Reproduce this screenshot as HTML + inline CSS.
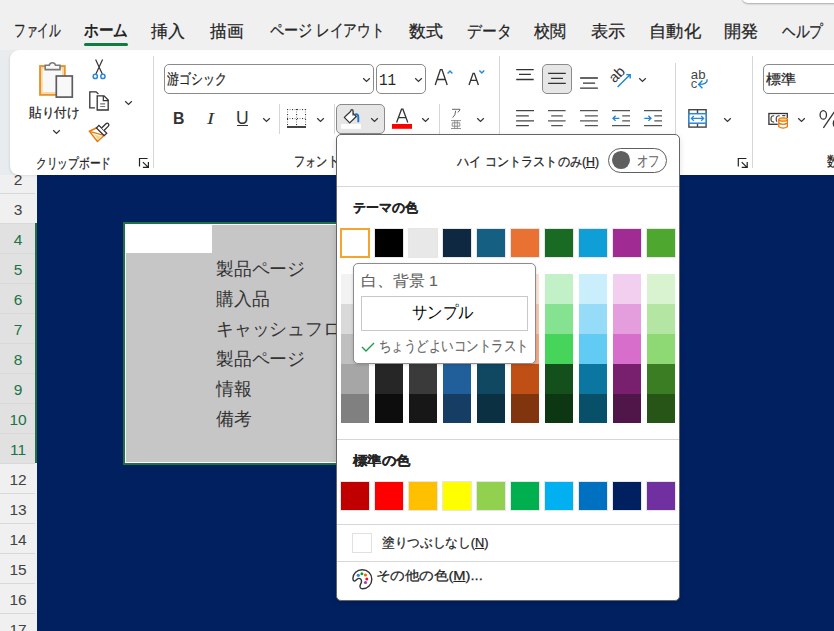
<!DOCTYPE html>
<html><head><meta charset="utf-8">
<style>
*{box-sizing:border-box;margin:0;padding:0}
html,body{width:834px;height:631px;overflow:hidden;background:#f0f0f0;font-family:"Liberation Sans",sans-serif;color:#242424}
.a{position:absolute}
.t{position:absolute;white-space:nowrap;line-height:1;-webkit-text-stroke:0.25px currentColor}
.tab{font-size:16px;top:23px;color:#242424}
.sep{position:absolute;width:1px;background:#d6d6d6}
.rh{position:absolute;left:0;width:35px;height:30px;border-bottom:1px solid #d9d9d9;font-size:15.5px;text-align:center;line-height:30px;color:#424242}
.sw{position:absolute;width:28px;height:28px;box-shadow:0 0 0 1px #e6e6e6}
.ct{position:absolute;left:217px;font-size:17px;line-height:1;color:#333;white-space:nowrap}
</style></head><body>

<div class="a" style="left:0;top:0;width:834px;height:50px;background:#f0f0f0"></div>
<div class="t" style="left:14.3px;top:23.3px;font-size:16.80px;transform:scaleX(0.6888);transform-origin:0 0;">ファイル</div>
<div class="t" style="left:84.0px;top:23.3px;font-size:16.80px;transform:scaleX(0.8606);transform-origin:0 0;font-weight:bold;-webkit-text-stroke:0">ホーム</div>
<div class="t" style="left:151.0px;top:24.2px;font-size:16.80px;transform:scaleX(0.9946);transform-origin:0 0;">挿入</div>
<div class="t" style="left:209.8px;top:24.2px;font-size:16.80px;transform:scaleX(0.9768);transform-origin:0 0;">描画</div>
<div class="t" style="left:269.7px;top:23.0px;font-size:16.80px;transform:scaleX(0.8310);transform-origin:0 0;">ページ</div>
<div class="t" style="left:315.9px;top:23.2px;font-size:16.80px;transform:scaleX(0.8038);transform-origin:0 0;">レイアウト</div>
<div class="t" style="left:408.5px;top:24.2px;font-size:16.80px;transform:scaleX(0.9950);transform-origin:0 0;">数式</div>
<div class="t" style="left:466.5px;top:23.8px;font-size:16.80px;transform:scaleX(0.8716);transform-origin:0 0;">データ</div>
<div class="t" style="left:533.8px;top:24.2px;font-size:16.80px;transform:scaleX(0.9406);transform-origin:0 0;">校閲</div>
<div class="t" style="left:591.0px;top:24.2px;font-size:16.80px;transform:scaleX(1.0078);transform-origin:0 0;">表示</div>
<div class="t" style="left:648.7px;top:24.2px;font-size:16.80px;transform:scaleX(1.0188);transform-origin:0 0;">自動化</div>
<div class="t" style="left:723.7px;top:24.2px;font-size:16.80px;transform:scaleX(1.0098);transform-origin:0 0;">開発</div>
<div class="t" style="left:781.6px;top:24.2px;font-size:16.80px;transform:scaleX(0.8056);transform-origin:0 0;">ヘルプ</div>
<div class="a" style="left:84px;top:43px;width:44px;height:3px;border-radius:2px;background:#107c41"></div>
<div class="a" style="left:742px;top:-10px;width:120px;height:13px;background:#fff;border-radius:6px;box-shadow:0 1px 2px rgba(0,0,0,.3)"></div>
<div class="a" style="left:0;top:50px;width:20px;height:125px;background:#e8ecef"></div>
<div class="a" style="left:0;top:175px;width:37px;height:456px;background:#f0f0f0"></div>
<div class="a" style="left:37px;top:175px;width:797px;height:456px;background:#002060"></div>
<div class="rh" style="top:164px;height:30px;background:#f0f0f0;color:#424242"><span style="position:relative;top:0.5px;left:0.5px">2</span></div>
<div class="rh" style="top:194px;height:30px;background:#f0f0f0;color:#424242"><span style="position:relative;top:0.5px;left:0.5px">3</span></div>
<div class="rh" style="top:224px;height:30px;background:#e1e1e1;color:#1a7444"><span style="position:relative;top:0.5px;left:0.5px">4</span></div>
<div class="rh" style="top:254px;height:30px;background:#e1e1e1;color:#1a7444"><span style="position:relative;top:0.5px;left:0.5px">5</span></div>
<div class="rh" style="top:284px;height:30px;background:#e1e1e1;color:#1a7444"><span style="position:relative;top:0.5px;left:0.5px">6</span></div>
<div class="rh" style="top:314px;height:30px;background:#e1e1e1;color:#1a7444"><span style="position:relative;top:0.5px;left:0.5px">7</span></div>
<div class="rh" style="top:344px;height:30px;background:#e1e1e1;color:#1a7444"><span style="position:relative;top:0.5px;left:0.5px">8</span></div>
<div class="rh" style="top:374px;height:30px;background:#e1e1e1;color:#1a7444"><span style="position:relative;top:0.5px;left:0.5px">9</span></div>
<div class="rh" style="top:404px;height:30px;background:#e1e1e1;color:#1a7444"><span style="position:relative;top:0.5px;left:0.5px">10</span></div>
<div class="rh" style="top:434px;height:30px;background:#e1e1e1;color:#1a7444"><span style="position:relative;top:0.5px;left:0.5px">11</span></div>
<div class="rh" style="top:464px;height:30px;background:#f0f0f0;color:#424242"><span style="position:relative;top:0.5px;left:0.5px">12</span></div>
<div class="rh" style="top:494px;height:30px;background:#f0f0f0;color:#424242"><span style="position:relative;top:0.5px;left:0.5px">13</span></div>
<div class="rh" style="top:524px;height:30px;background:#f0f0f0;color:#424242"><span style="position:relative;top:0.5px;left:0.5px">14</span></div>
<div class="rh" style="top:554px;height:30px;background:#f0f0f0;color:#424242"><span style="position:relative;top:0.5px;left:0.5px">15</span></div>
<div class="rh" style="top:584px;height:30px;background:#f0f0f0;color:#424242"><span style="position:relative;top:0.5px;left:0.5px">16</span></div>
<div class="rh" style="top:614px;height:30px;background:#f0f0f0;color:#424242"><span style="position:relative;top:0.5px;left:0.5px">17</span></div>
<div class="a" style="left:35px;top:223px;width:2px;height:240px;background:#1f7044"></div>
<div class="a" style="left:0;top:50px;width:20px;height:125px;background:#e8ecef"></div>
<div class="a" style="left:10px;top:50px;width:840px;height:125px;background:#fff;border-radius:9px;box-shadow:-1px 1px 2px rgba(0,0,0,.08)"></div>
<div class="a" style="left:123px;top:222px;width:230px;height:243px;border:2px solid #1f7044;background:#c6c6c6;box-shadow:inset 0 0 0 1px #fff"></div>
<div class="a" style="left:125px;top:224px;width:87px;height:29px;background:#fff"></div>
<div class="t" style="left:216px;top:260.8px;font-size:17.5px;transform:scaleX(0.989);transform-origin:0 0;color:#333;-webkit-text-stroke:0">製品ページ</div>
<div class="t" style="left:216px;top:290.8px;font-size:17.5px;transform:scaleX(0.989);transform-origin:0 0;color:#333;-webkit-text-stroke:0">購入品</div>
<div class="t" style="left:216px;top:320.8px;font-size:17.5px;transform:scaleX(0.989);transform-origin:0 0;color:#333;-webkit-text-stroke:0">キャッシュフロー</div>
<div class="t" style="left:216px;top:350.8px;font-size:17.5px;transform:scaleX(0.989);transform-origin:0 0;color:#333;-webkit-text-stroke:0">製品ページ</div>
<div class="t" style="left:216px;top:380.8px;font-size:17.5px;transform:scaleX(0.989);transform-origin:0 0;color:#333;-webkit-text-stroke:0">情報</div>
<div class="t" style="left:216px;top:410.8px;font-size:17.5px;transform:scaleX(0.989);transform-origin:0 0;color:#333;-webkit-text-stroke:0">備考</div>
<div class="t" style="left:28.8px;top:105.5px;font-size:13.30px;transform:scaleX(0.9658);transform-origin:0 0;">貼り付け</div>
<svg class="a" style="left:51.5px;top:129.0px" width="9" height="6" viewBox="0 0 9 6"><path d="M1.2 1.2 L4.5 4.4 L7.8 1.2" fill="none" stroke="#333" stroke-width="1.2"/></svg>
<div class="t" style="left:35.6px;top:155.6px;font-size:14.30px;transform:scaleX(0.7676);transform-origin:0 0;">クリップボード</div>
<svg class="a" style="left:124.0px;top:99.5px" width="9" height="6" viewBox="0 0 9 6"><path d="M1.2 1.2 L4.5 4.4 L7.8 1.2" fill="none" stroke="#333" stroke-width="1.2"/></svg>
<div class="sep" style="left:153px;top:56px;height:112px"></div>
<div class="a" style="left:164px;top:64px;width:210px;height:30px;border:1px solid #8a8a8a;border-radius:5px"></div>
<div class="t" style="left:166.8px;top:72.3px;font-size:14.60px;transform:scaleX(0.7956);transform-origin:0 0;">游ゴシック</div>
<svg class="a" style="left:362.0px;top:77.0px" width="9" height="6" viewBox="0 0 9 6"><path d="M1.2 1.2 L4.5 4.4 L7.8 1.2" fill="none" stroke="#333" stroke-width="1.2"/></svg>
<div class="a" style="left:376px;top:64px;width:50px;height:30px;border:1px solid #8a8a8a;border-radius:5px"></div>
<div class="t" style="left:379.4px;top:72.9px;font-size:16.00px;transform:scaleX(0.8907);transform-origin:0 0;font-family:'Liberation Mono';-webkit-text-stroke:0">11</div>
<svg class="a" style="left:414.0px;top:77.0px" width="9" height="6" viewBox="0 0 9 6"><path d="M1.2 1.2 L4.5 4.4 L7.8 1.2" fill="none" stroke="#333" stroke-width="1.2"/></svg>
<div class="t" style="left:173.3px;top:109.9px;font-size:16.03px;transform:scaleX(0.9877);transform-origin:0 0;font-weight:bold;color:#333;-webkit-text-stroke:0">B</div>
<div class="t" style="left:207.0px;top:109.5px;font-size:17.16px;transform:scaleX(1.2293);transform-origin:0 0;font-family:'Liberation Serif';font-style:italic;color:#333;-webkit-text-stroke:0">I</div>
<div class="t" style="left:236.0px;top:110.3px;font-size:17.96px;transform:scaleX(0.9768);transform-origin:0 0;color:#333;-webkit-text-stroke:0">U</div>
<div class="a" style="left:237px;top:125px;width:11px;height:1.4px;background:#333"></div>
<svg class="a" style="left:261.5px;top:116.5px" width="9" height="6" viewBox="0 0 9 6"><path d="M1.2 1.2 L4.5 4.4 L7.8 1.2" fill="none" stroke="#333" stroke-width="1.2"/></svg>
<div class="sep" style="left:279px;top:104px;height:30px"></div>
<svg class="a" style="left:316.0px;top:116.5px" width="9" height="6" viewBox="0 0 9 6"><path d="M1.2 1.2 L4.5 4.4 L7.8 1.2" fill="none" stroke="#333" stroke-width="1.2"/></svg>
<div class="sep" style="left:334px;top:104px;height:30px"></div>
<div class="a" style="left:336px;top:104px;width:49px;height:30px;border:1px solid #8a8a8a;border-radius:5px;background:#e6e6e6"></div>
<svg class="a" style="left:370.0px;top:116.5px" width="9" height="6" viewBox="0 0 9 6"><path d="M1.2 1.2 L4.5 4.4 L7.8 1.2" fill="none" stroke="#333" stroke-width="1.2"/></svg>
<svg class="a" style="left:421.0px;top:116.5px" width="9" height="6" viewBox="0 0 9 6"><path d="M1.2 1.2 L4.5 4.4 L7.8 1.2" fill="none" stroke="#333" stroke-width="1.2"/></svg>
<div class="sep" style="left:439px;top:104px;height:30px"></div>
<svg class="a" style="left:475.5px;top:116.5px" width="9" height="6" viewBox="0 0 9 6"><path d="M1.2 1.2 L4.5 4.4 L7.8 1.2" fill="none" stroke="#333" stroke-width="1.2"/></svg>
<div class="t" style="left:294.3px;top:154.4px;font-size:14.30px;transform:scaleX(0.7987);transform-origin:0 0;">フォント</div>
<div class="sep" style="left:499px;top:56px;height:112px"></div>
<div class="a" style="left:542px;top:64px;width:30px;height:30px;border:1px solid #8a8a8a;border-radius:5px;background:#e6e6e6"></div>
<svg class="a" style="left:638.0px;top:77.0px" width="9" height="6" viewBox="0 0 9 6"><path d="M1.2 1.2 L4.5 4.4 L7.8 1.2" fill="none" stroke="#333" stroke-width="1.2"/></svg>
<svg class="a" style="left:723.0px;top:117.0px" width="9" height="6" viewBox="0 0 9 6"><path d="M1.2 1.2 L4.5 4.4 L7.8 1.2" fill="none" stroke="#333" stroke-width="1.2"/></svg>
<div class="sep" style="left:675px;top:63px;height:105px"></div>
<div class="sep" style="left:752px;top:56px;height:112px"></div>
<div class="a" style="left:763px;top:64px;width:100px;height:30px;border:1px solid #8a8a8a;border-radius:5px"></div>
<div class="t" style="left:766.0px;top:72.0px;font-size:14.00px;transform:scaleX(1.0710);transform-origin:0 0;">標準</div>
<svg class="a" style="left:797.0px;top:117.0px" width="9" height="6" viewBox="0 0 9 6"><path d="M1.2 1.2 L4.5 4.4 L7.8 1.2" fill="none" stroke="#333" stroke-width="1.2"/></svg>
<svg class="a" style="left:810px;top:100px" width="30" height="32" viewBox="810 100 30 32"><g fill="none" stroke="#333" stroke-width="1.3"><ellipse cx="823.3" cy="114.9" rx="3.2" ry="4.3"/><path d="M823.4 127.8 L835.5 110.2"/><ellipse cx="836.5" cy="123.4" rx="3.2" ry="4.3"/></g></svg>
<div class="t" style="left:827px;top:154.4px;font-size:14.3px;transform:scaleX(0.85);transform-origin:0 0">数</div>
<svg class="a" style="left:0;top:0" width="834" height="180" viewBox="0 0 834 180">
<g fill="none" stroke-linecap="butt">
<!-- paste -->
<rect x="40.1" y="66.1" width="24.6" height="28.7" fill="#f8f8f8" stroke="#E8912D" stroke-width="2"/>
<rect x="41.9" y="67.9" width="21" height="25" fill="none" stroke="#F9D48B" stroke-width="1.4"/>
<path d="M45.2 65.3 H49.2 A3.3 3.3 0 0 1 55.6 65.3 H60 V69.6 H45.2 Z" fill="#f8f8f8" stroke="#7a7a7a" stroke-width="1.6"/>
<rect x="56.3" y="76" width="16" height="21.1" fill="#f8f8f8" stroke="#5c5c5c" stroke-width="1.7"/>
<!-- scissors -->
<path d="M95.6 59.5 L102.3 74 M102.6 59.5 L95.9 74" stroke="#333" stroke-width="1.2"/>
<circle cx="95.3" cy="76.4" r="2.1" stroke="#2b88d8" stroke-width="1.5" fill="#fff"/>
<circle cx="102.9" cy="76.4" r="2.1" stroke="#2b88d8" stroke-width="1.5" fill="#fff"/>
<!-- copy -->
<path d="M94.9 107.8 H89.8 V91.8 H96.1 L98.4 94" stroke="#333" stroke-width="1.3" fill="#fff"/>
<path d="M97.2 95.9 H104 L108.2 100.1 V110 H97.2 Z" stroke="#333" stroke-width="1.3" fill="#fff"/>
<path d="M103.3 95.9 V100.6 H108.2" stroke="#333" stroke-width="1.2"/>
<path d="M100.2 103.9 H105.2 M100.2 106.5 H105.2" stroke="#777" stroke-width="1.1"/>
<!-- brush -->
<g transform="translate(101.5 130.6) rotate(45)">
<path d="M-5.4 1.4 Q-6.5 5 -8.3 9 L4.8 10.5 L5.2 1.4 Z" fill="#fff" stroke="#E8780E" stroke-width="1.5" stroke-linejoin="round"/>
<path d="M-2.5 7.6 L4.6 4.3 L4.4 9.6 Z" fill="#F9D48B"/>
<path d="M-7.3 8.6 L5 1.6" stroke="#E8780E" stroke-width="1.3"/>
<rect x="-5.5" y="-1.9" width="11" height="3.6" fill="#fff" stroke="#333" stroke-width="1.3"/>
<path d="M-1.7 -1.9 V-8 A1.7 1.7 0 0 1 1.7 -8 V-1.9" fill="#fff" stroke="#333" stroke-width="1.3"/>
</g>
<!-- launchers -->
<path d="M139.5 166.6 V158.5 H147.6 M142.9 162.1 L148 167.2 M142.9 167.3 H148.4 V162.1" stroke="#222" stroke-width="1.2"/>
<path d="M738.3 166.6 V158.5 H746.4 M741.7 162.1 L746.8 167.2 M741.7 167.3 H747.2 V162.1" stroke="#222" stroke-width="1.2"/>
<!-- grow/shrink A -->
<path d="M435.2 85 L440.4 69.6 H442 L447.2 85 M437.3 79.5 H445.1" stroke="#333" stroke-width="1.35"/>
<path d="M447.6 73.5 L450 71 L452.4 73.5" stroke="#2b88d8" stroke-width="1.5"/>
<path d="M469 85 L473.1 73.4 H474.3 L478.4 85 M470.6 80.4 H476.8" stroke="#333" stroke-width="1.35"/>
<path d="M479.4 70.5 L481.8 73 L484.2 70.5" stroke="#2b88d8" stroke-width="1.5"/>
<!-- borders -->
<rect x="287" y="109" width="1.1" height="1.1" fill="#3a3a3a" stroke="none"/>
<rect x="287" y="111.5" width="1.1" height="1.1" fill="#999" stroke="none"/>
<rect x="287" y="114" width="1.1" height="1.1" fill="#3a3a3a" stroke="none"/>
<rect x="287" y="116.5" width="1.1" height="1.1" fill="#999" stroke="none"/>
<rect x="287" y="118" width="1.1" height="1.1" fill="#3a3a3a" stroke="none"/>
<rect x="287" y="119" width="1.1" height="1.1" fill="#3a3a3a" stroke="none"/>
<rect x="287" y="121.5" width="1.1" height="1.1" fill="#999" stroke="none"/>
<rect x="287" y="124" width="1.1" height="1.1" fill="#3a3a3a" stroke="none"/>
<rect x="289.5" y="109" width="1.1" height="1.1" fill="#999" stroke="none"/>
<rect x="289.5" y="118" width="1.1" height="1.1" fill="#999" stroke="none"/>
<rect x="292" y="109" width="1.1" height="1.1" fill="#3a3a3a" stroke="none"/>
<rect x="292" y="118" width="1.1" height="1.1" fill="#3a3a3a" stroke="none"/>
<rect x="294.5" y="109" width="1.1" height="1.1" fill="#999" stroke="none"/>
<rect x="294.5" y="118" width="1.1" height="1.1" fill="#999" stroke="none"/>
<rect x="296" y="109" width="1.1" height="1.1" fill="#3a3a3a" stroke="none"/>
<rect x="296" y="111.5" width="1.1" height="1.1" fill="#999" stroke="none"/>
<rect x="296" y="114" width="1.1" height="1.1" fill="#3a3a3a" stroke="none"/>
<rect x="296" y="116.5" width="1.1" height="1.1" fill="#999" stroke="none"/>
<rect x="296" y="119" width="1.1" height="1.1" fill="#3a3a3a" stroke="none"/>
<rect x="296" y="121.5" width="1.1" height="1.1" fill="#999" stroke="none"/>
<rect x="296" y="124" width="1.1" height="1.1" fill="#3a3a3a" stroke="none"/>
<rect x="297" y="109" width="1.1" height="1.1" fill="#3a3a3a" stroke="none"/>
<rect x="297" y="118" width="1.1" height="1.1" fill="#3a3a3a" stroke="none"/>
<rect x="299.5" y="109" width="1.1" height="1.1" fill="#999" stroke="none"/>
<rect x="299.5" y="118" width="1.1" height="1.1" fill="#999" stroke="none"/>
<rect x="302" y="109" width="1.1" height="1.1" fill="#3a3a3a" stroke="none"/>
<rect x="302" y="118" width="1.1" height="1.1" fill="#3a3a3a" stroke="none"/>
<rect x="304.5" y="109" width="1.1" height="1.1" fill="#999" stroke="none"/>
<rect x="304.5" y="118" width="1.1" height="1.1" fill="#999" stroke="none"/>
<rect x="305" y="109" width="1.1" height="1.1" fill="#3a3a3a" stroke="none"/>
<rect x="305" y="111.5" width="1.1" height="1.1" fill="#999" stroke="none"/>
<rect x="305" y="114" width="1.1" height="1.1" fill="#3a3a3a" stroke="none"/>
<rect x="305" y="116.5" width="1.1" height="1.1" fill="#999" stroke="none"/>
<rect x="305" y="119" width="1.1" height="1.1" fill="#3a3a3a" stroke="none"/>
<rect x="305" y="121.5" width="1.1" height="1.1" fill="#999" stroke="none"/>
<rect x="305" y="124" width="1.1" height="1.1" fill="#3a3a3a" stroke="none"/>
<rect x="287" y="126" width="19" height="2" fill="#444" stroke="none"/>
<!-- bucket -->
<path d="M350.8 111.2 L344.3 117.4 L349.7 122.9 L356.3 116.5 L353.2 113.4" stroke="#333" stroke-width="1.3" fill="#fff" stroke-linejoin="round"/>
<path d="M353.1 115.6 V111.2 Q353.1 109.6 351.9 109.6 Q350.8 109.6 350.7 111.3" stroke="#333" stroke-width="1.3"/>
<path d="M355.4 114.3 Q358.3 113.6 358.3 117.2 V121.4" stroke="#1a73c8" stroke-width="1.9" stroke-linecap="round"/>
<rect x="341.1" y="124" width="20" height="4.8" fill="#fff"/>
<!-- font color A -->
<path d="M396.6 122.4 L401.5 109.2 H402.9 L407.8 122.4 M398.5 117.6 H405.9" stroke="#333" stroke-width="1.3"/>
<rect x="392" y="124" width="20" height="4.8" fill="#ff0000"/>
<!-- phonetic -->
<path d="M452 109.3 H460 Q459.5 111.5 457.6 112.3 M455.6 110.8 Q455.6 115.5 452.6 117.6" stroke="#555" stroke-width="0.9"/>
<path d="M451 120.6 H461 M451 128.5 H461 M454.7 120.6 V128.5 M457.3 120.6 V128.5 M452.2 122.8 V126.2 H459.8 V122.8 Z" stroke="#777" stroke-width="0.8"/>
<!-- align top/mid/bottom -->
<path d="M516.2 69.6 H533.7 M519 74.4 H530.9 M516.2 79.5 H533.7" stroke="#333" stroke-width="1.3"/>
<path d="M548.1 73.3 H565.8 M551.1 78.3 H563 M548.1 83.3 H565.8" stroke="#333" stroke-width="1.3"/>
<path d="M580.1 78 H597.9 M583 83.1 H595.1 M580.1 88.2 H597.9" stroke="#333" stroke-width="1.3"/>
<!-- orientation -->
<text x="0" y="0" font-family="Liberation Sans" font-size="14.5" fill="#333" transform="translate(614.5 83.6) rotate(-45)">ab</text>
<path d="M617.6 87 L630.2 74.6 M626.3 74.6 H630.2 V78.6" stroke="#1a86d9" stroke-width="1.4"/>
<!-- row2 align -->
<path d="M516.1 110.7 H534 M516.1 115.9 H528.8 M516.1 120.9 H534 M516.1 125.7 H528.8" stroke="#444" stroke-width="1.3"/>
<path d="M548 110.7 H565.6 M551.2 115.9 H562.8 M548 120.9 H565.6 M551.2 125.7 H562.8" stroke="#555" stroke-width="1.3"/>
<path d="M580 110.7 H597.9 M584.8 115.9 H597.9 M580 120.9 H597.9 M584.8 125.7 H597.9" stroke="#555" stroke-width="1.3"/>
<path d="M612 110.7 H630 M622.2 115.9 H630 M622.2 120.9 H630 M612 125.7 H630" stroke="#555" stroke-width="1.3"/>
<path d="M613 118.3 H619.4 M615.6 115.7 L613 118.3 L615.6 120.9" stroke="#1a86d9" stroke-width="1.3"/>
<path d="M644 110.7 H662 M654.3 115.9 H662 M654.3 120.9 H662 M644 125.7 H662" stroke="#555" stroke-width="1.3"/>
<path d="M644.3 118.3 H651 M648.4 115.7 L651 118.3 L648.4 120.9" stroke="#1a86d9" stroke-width="1.3"/>
<!-- wrap -->
<text x="690.8" y="78.5" font-family="Liberation Sans" font-size="13.2" fill="#444">ab</text>
<text x="690.8" y="88" font-family="Liberation Sans" font-size="13.2" fill="#555">c</text>
<path d="M707.2 79.2 Q707.6 84.4 699 84.4 M702.4 80.6 L698.6 84.4 L702.4 88.2" stroke="#1a86d9" stroke-width="1.4"/>
<!-- merge -->
<rect x="688.9" y="109.7" width="17.2" height="17.4" stroke="#444" stroke-width="1.4"/>
<path d="M697.5 109.7 V113.5 M697.5 123.3 V127" stroke="#444" stroke-width="1.4"/>
<rect x="688.9" y="113.7" width="17.2" height="9.5" fill="#fff" stroke="#2b88d8" stroke-width="1.5"/>
<path d="M691.5 118.4 H703.5 M693.8 116 L691.4 118.4 L693.8 120.8 M701.2 116 L703.6 118.4 L701.2 120.8" stroke="#2b88d8" stroke-width="1.3"/>
<!-- accounting -->
<rect x="768.9" y="113.5" width="18.4" height="10.8" stroke="#333" stroke-width="1.3"/>
<path d="M774.2 115.8 Q771 115.3 771 118.9 Q771 122.4 774.2 122 M779.6 115.8 Q776.2 115.3 776.2 118.9 Q776.2 121.2 777.2 121.8 M782.3 115.6 H785.3" stroke="#444" stroke-width="1.2"/>
<rect x="777.8" y="117.5" width="11" height="11.5" rx="3" fill="#fff" stroke="none"/>
<ellipse cx="783.1" cy="119.5" rx="4.3" ry="1.7" fill="#F9D48B" stroke="#E8780E" stroke-width="1.3"/>
<path d="M778.8 119.5 V126.8 Q783.1 129.5 787.4 126.8 V119.5 M778.8 123.1 Q783.1 125.6 787.4 123.1" stroke="#E8780E" stroke-width="1.3" fill="none"/>
</g>
</svg>
<div class="a" style="left:336px;top:134px;width:344px;height:467px;background:#fff;border:1px solid #666;border-radius:5px;box-shadow:0 2px 6px rgba(0,0,0,.12)"></div>
<div class="t" style="left:456.9px;top:155.4px;font-size:13.20px;transform:scaleX(0.9343);transform-origin:0 0;">ハイ コントラストのみ(<u>H</u>)</div>
<div class="a" style="left:608px;top:148px;width:59px;height:25px;border:1px solid #5f5f5f;border-radius:13px"></div>
<div class="a" style="left:612px;top:151.2px;width:17.8px;height:17.8px;border-radius:50%;background:#5f5f5f"></div>
<div class="t" style="left:637.4px;top:153.2px;font-size:15.00px;transform:scaleX(0.7649);transform-origin:0 0;color:#5f5f5f;-webkit-text-stroke:0.1px currentColor">オフ</div>
<div class="a" style="left:337px;top:186px;width:342px;height:1px;background:#d6d6d6"></div>
<div class="t" style="left:353.2px;top:200.6px;font-size:13.00px;transform:scaleX(0.9951);transform-origin:0 0;font-weight:bold;-webkit-text-stroke:0.2px currentColor">テーマの色</div>
<div class="sw" style="left:341px;top:229px;background:#FFFFFF"></div>
<div class="a" style="left:341px;top:274px;width:28px;height:30px;background:#F2F2F2"></div>
<div class="a" style="left:341px;top:304px;width:28px;height:30px;background:#D9D9D9"></div>
<div class="a" style="left:341px;top:334px;width:28px;height:30px;background:#BFBFBF"></div>
<div class="a" style="left:341px;top:364px;width:28px;height:30px;background:#A6A6A6"></div>
<div class="a" style="left:341px;top:394px;width:28px;height:29px;background:#808080"></div>
<div class="sw" style="left:375px;top:229px;background:#000000"></div>
<div class="a" style="left:375px;top:274px;width:28px;height:30px;background:#808080"></div>
<div class="a" style="left:375px;top:304px;width:28px;height:30px;background:#595959"></div>
<div class="a" style="left:375px;top:334px;width:28px;height:30px;background:#404040"></div>
<div class="a" style="left:375px;top:364px;width:28px;height:30px;background:#262626"></div>
<div class="a" style="left:375px;top:394px;width:28px;height:29px;background:#0D0D0D"></div>
<div class="sw" style="left:409px;top:229px;background:#E8E8E8"></div>
<div class="a" style="left:409px;top:274px;width:28px;height:30px;background:#D1D1D1"></div>
<div class="a" style="left:409px;top:304px;width:28px;height:30px;background:#AEAEAE"></div>
<div class="a" style="left:409px;top:334px;width:28px;height:30px;background:#747474"></div>
<div class="a" style="left:409px;top:364px;width:28px;height:30px;background:#3A3A3A"></div>
<div class="a" style="left:409px;top:394px;width:28px;height:29px;background:#171717"></div>
<div class="sw" style="left:443px;top:229px;background:#0E2841"></div>
<div class="a" style="left:443px;top:274px;width:28px;height:30px;background:#DCEAF7"></div>
<div class="a" style="left:443px;top:304px;width:28px;height:30px;background:#A6CAEC"></div>
<div class="a" style="left:443px;top:334px;width:28px;height:30px;background:#4E95D9"></div>
<div class="a" style="left:443px;top:364px;width:28px;height:30px;background:#215F9A"></div>
<div class="a" style="left:443px;top:394px;width:28px;height:29px;background:#163E64"></div>
<div class="sw" style="left:477px;top:229px;background:#156082"></div>
<div class="a" style="left:477px;top:274px;width:28px;height:30px;background:#C1E5F5"></div>
<div class="a" style="left:477px;top:304px;width:28px;height:30px;background:#83CBEB"></div>
<div class="a" style="left:477px;top:334px;width:28px;height:30px;background:#46B1E1"></div>
<div class="a" style="left:477px;top:364px;width:28px;height:30px;background:#104862"></div>
<div class="a" style="left:477px;top:394px;width:28px;height:29px;background:#0B3041"></div>
<div class="sw" style="left:511px;top:229px;background:#E97132"></div>
<div class="a" style="left:511px;top:274px;width:28px;height:30px;background:#FBE3D6"></div>
<div class="a" style="left:511px;top:304px;width:28px;height:30px;background:#F6C6AD"></div>
<div class="a" style="left:511px;top:334px;width:28px;height:30px;background:#F2AA84"></div>
<div class="a" style="left:511px;top:364px;width:28px;height:30px;background:#C04F15"></div>
<div class="a" style="left:511px;top:394px;width:28px;height:29px;background:#80350E"></div>
<div class="sw" style="left:545px;top:229px;background:#196B24"></div>
<div class="a" style="left:545px;top:274px;width:28px;height:30px;background:#C2F1C8"></div>
<div class="a" style="left:545px;top:304px;width:28px;height:30px;background:#84E291"></div>
<div class="a" style="left:545px;top:334px;width:28px;height:30px;background:#47D45A"></div>
<div class="a" style="left:545px;top:364px;width:28px;height:30px;background:#13501B"></div>
<div class="a" style="left:545px;top:394px;width:28px;height:29px;background:#0D3612"></div>
<div class="sw" style="left:579px;top:229px;background:#0F9ED5"></div>
<div class="a" style="left:579px;top:274px;width:28px;height:30px;background:#CAEEFB"></div>
<div class="a" style="left:579px;top:304px;width:28px;height:30px;background:#96DCF8"></div>
<div class="a" style="left:579px;top:334px;width:28px;height:30px;background:#61CBF4"></div>
<div class="a" style="left:579px;top:364px;width:28px;height:30px;background:#0B76A0"></div>
<div class="a" style="left:579px;top:394px;width:28px;height:29px;background:#084F6A"></div>
<div class="sw" style="left:613px;top:229px;background:#A02B93"></div>
<div class="a" style="left:613px;top:274px;width:28px;height:30px;background:#F2CFEE"></div>
<div class="a" style="left:613px;top:304px;width:28px;height:30px;background:#E59EDD"></div>
<div class="a" style="left:613px;top:334px;width:28px;height:30px;background:#D86ECC"></div>
<div class="a" style="left:613px;top:364px;width:28px;height:30px;background:#78206E"></div>
<div class="a" style="left:613px;top:394px;width:28px;height:29px;background:#501649"></div>
<div class="sw" style="left:647px;top:229px;background:#4EA72E"></div>
<div class="a" style="left:647px;top:274px;width:28px;height:30px;background:#D9F2D0"></div>
<div class="a" style="left:647px;top:304px;width:28px;height:30px;background:#B4E5A2"></div>
<div class="a" style="left:647px;top:334px;width:28px;height:30px;background:#8ED973"></div>
<div class="a" style="left:647px;top:364px;width:28px;height:30px;background:#3B7D23"></div>
<div class="a" style="left:647px;top:394px;width:28px;height:29px;background:#275417"></div>
<div class="a" style="left:340px;top:228px;width:30px;height:30px;border:2px solid #f7a32f;background:#fff"></div>
<div class="a" style="left:337px;top:439px;width:342px;height:1px;background:#d6d6d6"></div>
<div class="t" style="left:353.2px;top:453.9px;font-size:13.00px;transform:scaleX(1.1016);transform-origin:0 0;font-weight:bold;-webkit-text-stroke:0.2px currentColor">標準の色</div>
<div class="sw" style="left:341px;top:482px;background:#C00000"></div>
<div class="sw" style="left:375px;top:482px;background:#FF0000"></div>
<div class="sw" style="left:409px;top:482px;background:#FFC000"></div>
<div class="sw" style="left:443px;top:482px;background:#FFFF00"></div>
<div class="sw" style="left:477px;top:482px;background:#92D050"></div>
<div class="sw" style="left:511px;top:482px;background:#00B050"></div>
<div class="sw" style="left:545px;top:482px;background:#00B0F0"></div>
<div class="sw" style="left:579px;top:482px;background:#0070C0"></div>
<div class="sw" style="left:613px;top:482px;background:#002060"></div>
<div class="sw" style="left:647px;top:482px;background:#7030A0"></div>
<div class="a" style="left:337px;top:524px;width:342px;height:1px;background:#d6d6d6"></div>
<div class="a" style="left:352px;top:533px;width:20px;height:20px;border:1px solid #e0e0e0"></div>
<div class="t" style="left:381.5px;top:536.3px;font-size:13.20px;transform:scaleX(0.9749);transform-origin:0 0;">塗りつぶしなし(<u>N</u>)</div>
<div class="a" style="left:337px;top:561px;width:342px;height:1px;background:#d6d6d6"></div>
<div class="t" style="left:376.2px;top:568.6px;font-size:13.20px;transform:scaleX(1.1143);transform-origin:0 0;">その他の色(<u>M</u>)...</div>
<svg class="a" style="left:352px;top:569px" width="21" height="21" viewBox="0 0 21 21"><path d="M0.9 9.6 C0.9 4.3 5 0.8 10.3 0.8 C15.8 0.8 19.8 4.8 19.8 10.2 C19.8 15.7 15.7 19.8 10.6 19.8 C8.3 19.8 7.3 17.6 8.4 15.6 C9.4 13.8 10.3 11.6 8.6 10 C7 8.7 5.2 9.8 3.9 11.2 C2.6 12.6 0.9 12.2 0.9 9.6 Z" fill="#fff" stroke="#333" stroke-width="1.4"/><circle cx="6.3" cy="6.3" r="1.6" fill="#2b88d8"/><circle cx="9.9" cy="4.8" r="1.5" fill="#13a10e"/><circle cx="13.5" cy="6" r="1.6" fill="#f7630c"/><circle cx="14.8" cy="9.9" r="1.5" fill="#e81123"/><circle cx="13.5" cy="13.5" r="1.6" fill="#9b3bc8"/></svg>
<div class="a" style="left:353px;top:263px;width:183px;height:101px;background:#fff;border:1px solid #8c8c8c;border-radius:5px;box-shadow:0 1px 3px rgba(0,0,0,.15)"></div>
<div class="t" style="left:361.0px;top:273.0px;font-size:15.00px;transform:scaleX(1.0611);transform-origin:0 0;color:#616161;-webkit-text-stroke:0.1px currentColor">白、背景 1</div>
<div class="a" style="left:361px;top:296px;width:167px;height:35px;border:1px solid #c8c8c8"></div>
<div class="t" style="left:412.0px;top:304.0px;font-size:17.00px;transform:scaleX(0.9008);transform-origin:0 0;color:#000;-webkit-text-stroke:0">サンプル</div>
<svg class="a" style="left:361px;top:341px" width="14" height="12" viewBox="0 0 14 12"><path d="M1 6 L5 10 L13 2" fill="none" stroke="#1e9e4a" stroke-width="1.4"/></svg>
<div class="t" style="left:378.8px;top:337.8px;font-size:15.00px;transform:scaleX(0.8306);transform-origin:0 0;color:#616161;-webkit-text-stroke:0.1px currentColor">ちょうどよいコントラスト</div>
</body></html>
